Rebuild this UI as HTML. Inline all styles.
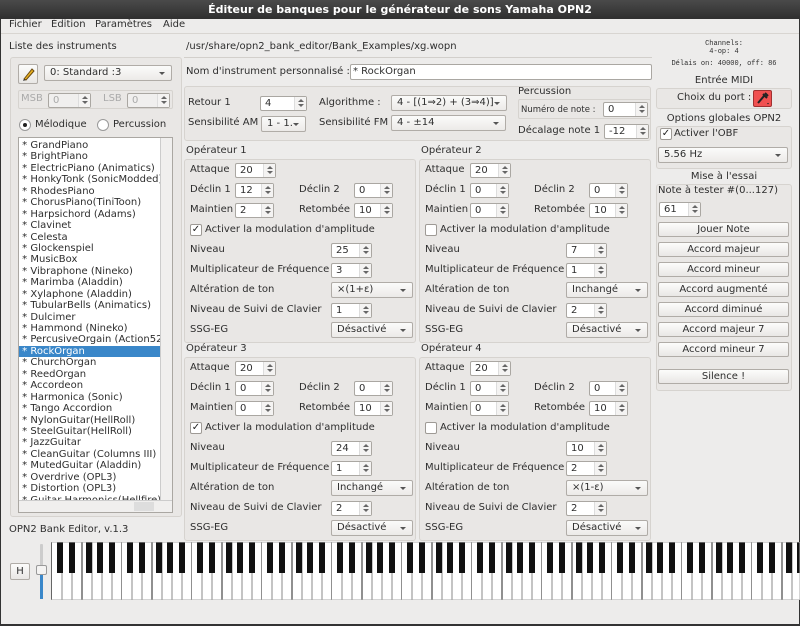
<!DOCTYPE html>
<html><head><meta charset="utf-8">
<style>
*{box-sizing:border-box;margin:0;padding:0}
body{width:800px;height:626px;position:relative;overflow:hidden;background:#edeceb;font-family:"DejaVu Sans","Liberation Sans",sans-serif;font-size:10px;color:#2e2e2e}
.a{position:absolute;white-space:nowrap}
.l{position:absolute;white-space:nowrap;line-height:14px}
.sp{position:absolute;height:15px;background:#fff;border:1px solid #aaa7a2;border-radius:2px;line-height:13px;padding-left:4px;font-size:10px}
.sp i{position:absolute;right:0;top:0;width:12px;height:13px;border-left:1px solid #ddd;background:#f4f3f2}
.sp i:before{content:"";position:absolute;left:3px;top:2px;border:3px solid transparent;border-bottom:3px solid #666;border-top:0}
.sp i:after{content:"";position:absolute;left:3px;top:7px;border:3px solid transparent;border-top:3px solid #666;border-bottom:0}
.dis{color:#aaa;background:#f0efee}
.cb{position:absolute;height:16px;background:linear-gradient(#fbfbfa,#eceae8);border:1px solid #b0aca7;border-radius:2px;line-height:14px;padding-left:5px;overflow:hidden}
.cb:after{content:"";position:absolute;right:6px;top:6px;border:3.5px solid transparent;border-top:3.5px solid #555;border-bottom:0}
.box{position:absolute;border:1px solid #d6d3cf;border-radius:3px;background:#e9e7e5}
.chk{position:absolute;width:12px;height:12px;background:#fff;border:1px solid #9e9a95;border-radius:2px;font-size:10px;line-height:10px;text-align:center;font-weight:bold;color:#222}
.btn{position:absolute;left:658px;width:131px;height:15px;background:linear-gradient(#fcfcfb,#e9e7e5);border:1px solid #b0aca7;border-radius:2px;text-align:center;line-height:13px}
.op{position:absolute;width:232px;height:184px;border:1px solid #d6d3cf;border-radius:3px;background:#e9e7e5}
.op .l{left:5px}
.lst div{height:11.45px;line-height:11.45px}
</style></head><body>
<div class="a" style="left:0;top:0;width:800px;height:19px;background:linear-gradient(#4a4a4a,#2f2f2f);color:#fff;font-weight:bold;font-size:11px;line-height:19px;text-align:center">Éditeur de banques pour le générateur de sons Yamaha OPN2</div>
<div class="a" style="left:0;top:19px;width:1px;height:607px;background:#333"></div>
<div class="a" style="left:799px;top:19px;width:1px;height:607px;background:#333"></div>
<div class="a" style="left:0;top:624px;width:800px;height:2px;background:#333"></div>
<div class="l" style="left:9px;top:18px">Fichier</div>
<div class="l" style="left:51px;top:18px">Édition</div>
<div class="l" style="left:95px;top:18px">Paramètres</div>
<div class="l" style="left:163px;top:18px">Aide</div>
<div class="a" style="left:1px;top:33px;width:798px;height:1px;background:#d8d5d1"></div>

<div class="l" style="left:9px;top:40px">Liste des instruments</div>
<div class="box" style="left:10px;top:57px;width:172px;height:460px"></div>
<div class="a" style="left:18px;top:64px;width:20px;height:20px;background:linear-gradient(#fcfcfb,#e9e7e5);border:1px solid #b0aca7;border-radius:2px">
<svg width="18" height="18" viewBox="0 0 18 18"><path d="M5 14 L13 4 L15 6 L7 15 Z" fill="#e8b020" stroke="#6a4a10" stroke-width="1"/><path d="M5 14 L4 16 L7 15" fill="#333"/></svg></div>
<div class="cb" style="left:44px;top:65px;width:128px">0: Standard :3</div>
<div class="a" style="left:18px;top:90px;width:155px;height:19px;border:1px solid #d6d3cf;border-radius:2px"></div>
<div class="l" style="left:21px;top:92px;color:#aaa">MSB</div>
<div class="sp dis" style="left:48px;top:93px;width:43px">0<i></i></div>
<div class="l" style="left:103px;top:92px;color:#aaa">LSB</div>
<div class="sp dis" style="left:127px;top:93px;width:43px">0<i></i></div>
<div class="a" style="left:19px;top:119px;width:12px;height:12px;border-radius:50%;background:#fff;border:1px solid #999"><div style="position:absolute;left:3px;top:3px;width:4px;height:4px;border-radius:50%;background:#222"></div></div>
<div class="l" style="left:35px;top:118px">Mélodique</div>
<div class="a" style="left:97px;top:119px;width:12px;height:12px;border-radius:50%;background:#fff;border:1px solid #999"></div>
<div class="l" style="left:113px;top:118px">Percussion</div>
<div class="a" style="left:18px;top:137px;width:155px;height:376px;background:#fff;border:1px solid #aaa7a2;overflow:hidden">
<div class="lst" style="position:absolute;left:0;top:2px;width:142px;font-size:10px;overflow:hidden">
<div>&nbsp;* GrandPiano</div><div>&nbsp;* BrightPiano</div><div>&nbsp;* ElectricPiano (Animatics)</div><div>&nbsp;* HonkyTonk (SonicModded)</div><div>&nbsp;* RhodesPiano</div><div>&nbsp;* ChorusPiano(TiniToon)</div><div>&nbsp;* Harpsichord (Adams)</div><div>&nbsp;* Clavinet</div><div>&nbsp;* Celesta</div><div>&nbsp;* Glockenspiel</div><div>&nbsp;* MusicBox</div><div>&nbsp;* Vibraphone (Nineko)</div><div>&nbsp;* Marimba (Aladdin)</div><div>&nbsp;* Xylaphone (Aladdin)</div><div>&nbsp;* TubularBells (Animatics)</div><div>&nbsp;* Dulcimer</div><div>&nbsp;* Hammond (Nineko)</div><div>&nbsp;* PercusiveOrgain (Action52)</div><div style="background:#3a87c9;color:#fff">&nbsp;* RockOrgan</div><div>&nbsp;* ChurchOrgan</div><div>&nbsp;* ReedOrgan</div><div>&nbsp;* Accordeon</div><div>&nbsp;* Harmonica (Sonic)</div><div>&nbsp;* Tango Accordion</div><div>&nbsp;* NylonGuitar(HellRoll)</div><div>&nbsp;* SteelGuitar(HellRoll)</div><div>&nbsp;* JazzGuitar</div><div>&nbsp;* CleanGuitar (Columns III)</div><div>&nbsp;* MutedGuitar (Aladdin)</div><div>&nbsp;* Overdrive (OPL3)</div><div>&nbsp;* Distortion (OPL3)</div><div>&nbsp;* Guitar Harmonics(Hellfire)</div>
</div>
<div style="position:absolute;right:0;top:0;width:12px;height:362px;background:#f0efee;border-left:1px solid #ccc"></div>
<div style="position:absolute;left:0;bottom:0;width:153px;height:12px;background:#f0efee;border-top:1px solid #ccc"><div style="position:absolute;left:115px;top:1px;width:20px;height:9px;background:#ddd"></div></div>
</div>
<div class="l" style="left:9px;top:523px">OPN2 Bank Editor, v.1.3</div>

<div class="l" style="left:186px;top:40px">/usr/share/opn2_bank_editor/Bank_Examples/xg.wopn</div>
<div class="a" style="left:184px;top:57px;width:468px;height:1px;background:#d2cfcb"></div>
<div class="l" style="left:186px;top:65px">Nom d'instrument personnalisé :</div>
<div class="sp" style="left:350px;top:64px;width:302px;height:16px;padding-left:2px">* RockOrgan</div>

<div class="box" style="left:184px;top:86px;width:467px;height:55px"></div>
<div class="l" style="left:188px;top:96px">Retour 1</div>
<div class="sp" style="left:260px;top:96px;width:47px">4<i></i></div>
<div class="l" style="left:188px;top:116px">Sensibilité AM</div>
<div class="cb" style="left:261px;top:116px;width:45px">1 - 1.</div>
<div class="l" style="left:319px;top:96px">Algorithme :</div>
<div class="cb" style="left:391px;top:95px;width:116px">4 - [(1⇒2) + (3⇒4)]</div>
<div class="l" style="left:319px;top:116px">Sensibilité FM</div>
<div class="cb" style="left:391px;top:115px;width:115px">4 - ±14</div>
<div class="l" style="left:518px;top:85px">Percussion</div>
<div class="a" style="left:518px;top:99px;width:133px;height:20px;border:1px solid #d6d3cf;border-radius:2px"></div>
<div class="l" style="left:521px;top:103px;font-size:8.5px">Numéro de note :</div>
<div class="sp" style="left:603px;top:102px;width:45px">0<i></i></div>
<div class="l" style="left:518px;top:124px">Décalage note 1</div>
<div class="sp" style="left:604px;top:124px;width:45px">-12<i></i></div>

<div class="l" style="left:186px;top:144px">Opérateur 1</div>
<div class="op" style="left:184px;top:159px">
<div class="l" style="top:3px">Attaque</div><div class="sp" style="left:50px;top:3px;width:41px">20<i></i></div>
<div class="l" style="top:23px">Déclin 1</div><div class="sp" style="left:50px;top:23px;width:39px">12<i></i></div>
<div class="l" style="left:114px;top:23px">Déclin 2</div><div class="sp" style="left:169px;top:23px;width:39px">0<i></i></div>
<div class="l" style="top:43px">Maintien</div><div class="sp" style="left:50px;top:43px;width:39px">2<i></i></div>
<div class="l" style="left:114px;top:43px">Retombée</div><div class="sp" style="left:169px;top:43px;width:39px">10<i></i></div>
<div class="chk" style="left:5px;top:64px">✓</div><div class="l" style="left:20px;top:63px">Activer la modulation d'amplitude</div>
<div class="l" style="top:83px">Niveau</div><div class="sp" style="left:146px;top:83px;width:41px">25<i></i></div>
<div class="l" style="top:103px">Multiplicateur de Fréquence</div><div class="sp" style="left:146px;top:103px;width:41px">3<i></i></div>
<div class="l" style="top:123px">Altération de ton</div><div class="cb" style="left:146px;top:122px;width:82px">×(1+ε)</div>
<div class="l" style="top:143px">Niveau de Suivi de Clavier</div><div class="sp" style="left:146px;top:143px;width:41px">1<i></i></div>
<div class="l" style="top:163px">SSG-EG</div><div class="cb" style="left:146px;top:162px;width:82px">Désactivé</div>
</div>

<div class="l" style="left:421px;top:144px">Opérateur 2</div>
<div class="op" style="left:419px;top:159px">
<div class="l" style="top:3px">Attaque</div><div class="sp" style="left:50px;top:3px;width:41px">20<i></i></div>
<div class="l" style="top:23px">Déclin 1</div><div class="sp" style="left:50px;top:23px;width:39px">0<i></i></div>
<div class="l" style="left:114px;top:23px">Déclin 2</div><div class="sp" style="left:169px;top:23px;width:39px">0<i></i></div>
<div class="l" style="top:43px">Maintien</div><div class="sp" style="left:50px;top:43px;width:39px">0<i></i></div>
<div class="l" style="left:114px;top:43px">Retombée</div><div class="sp" style="left:169px;top:43px;width:39px">10<i></i></div>
<div class="chk" style="left:5px;top:64px"></div><div class="l" style="left:20px;top:63px">Activer la modulation d'amplitude</div>
<div class="l" style="top:83px">Niveau</div><div class="sp" style="left:146px;top:83px;width:41px">7<i></i></div>
<div class="l" style="top:103px">Multiplicateur de Fréquence</div><div class="sp" style="left:146px;top:103px;width:41px">1<i></i></div>
<div class="l" style="top:123px">Altération de ton</div><div class="cb" style="left:146px;top:122px;width:82px">Inchangé</div>
<div class="l" style="top:143px">Niveau de Suivi de Clavier</div><div class="sp" style="left:146px;top:143px;width:41px">2<i></i></div>
<div class="l" style="top:163px">SSG-EG</div><div class="cb" style="left:146px;top:162px;width:82px">Désactivé</div>
</div>

<div class="l" style="left:186px;top:342px">Opérateur 3</div>
<div class="op" style="left:184px;top:357px">
<div class="l" style="top:3px">Attaque</div><div class="sp" style="left:50px;top:3px;width:41px">20<i></i></div>
<div class="l" style="top:23px">Déclin 1</div><div class="sp" style="left:50px;top:23px;width:39px">0<i></i></div>
<div class="l" style="left:114px;top:23px">Déclin 2</div><div class="sp" style="left:169px;top:23px;width:39px">0<i></i></div>
<div class="l" style="top:43px">Maintien</div><div class="sp" style="left:50px;top:43px;width:39px">0<i></i></div>
<div class="l" style="left:114px;top:43px">Retombée</div><div class="sp" style="left:169px;top:43px;width:39px">10<i></i></div>
<div class="chk" style="left:5px;top:64px">✓</div><div class="l" style="left:20px;top:63px">Activer la modulation d'amplitude</div>
<div class="l" style="top:83px">Niveau</div><div class="sp" style="left:146px;top:83px;width:41px">24<i></i></div>
<div class="l" style="top:103px">Multiplicateur de Fréquence</div><div class="sp" style="left:146px;top:103px;width:41px">1<i></i></div>
<div class="l" style="top:123px">Altération de ton</div><div class="cb" style="left:146px;top:122px;width:82px">Inchangé</div>
<div class="l" style="top:143px">Niveau de Suivi de Clavier</div><div class="sp" style="left:146px;top:143px;width:41px">2<i></i></div>
<div class="l" style="top:163px">SSG-EG</div><div class="cb" style="left:146px;top:162px;width:82px">Désactivé</div>
</div>

<div class="l" style="left:421px;top:342px">Opérateur 4</div>
<div class="op" style="left:419px;top:357px">
<div class="l" style="top:3px">Attaque</div><div class="sp" style="left:50px;top:3px;width:41px">20<i></i></div>
<div class="l" style="top:23px">Déclin 1</div><div class="sp" style="left:50px;top:23px;width:39px">0<i></i></div>
<div class="l" style="left:114px;top:23px">Déclin 2</div><div class="sp" style="left:169px;top:23px;width:39px">0<i></i></div>
<div class="l" style="top:43px">Maintien</div><div class="sp" style="left:50px;top:43px;width:39px">0<i></i></div>
<div class="l" style="left:114px;top:43px">Retombée</div><div class="sp" style="left:169px;top:43px;width:39px">10<i></i></div>
<div class="chk" style="left:5px;top:64px"></div><div class="l" style="left:20px;top:63px">Activer la modulation d'amplitude</div>
<div class="l" style="top:83px">Niveau</div><div class="sp" style="left:146px;top:83px;width:41px">10<i></i></div>
<div class="l" style="top:103px">Multiplicateur de Fréquence</div><div class="sp" style="left:146px;top:103px;width:41px">2<i></i></div>
<div class="l" style="top:123px">Altération de ton</div><div class="cb" style="left:146px;top:122px;width:82px">×(1-ε)</div>
<div class="l" style="top:143px">Niveau de Suivi de Clavier</div><div class="sp" style="left:146px;top:143px;width:41px">2<i></i></div>
<div class="l" style="top:163px">SSG-EG</div><div class="cb" style="left:146px;top:162px;width:82px">Désactivé</div>
</div>

<div class="a" style="left:656px;top:40px;width:136px;text-align:center;font-family:'Liberation Mono',monospace;font-size:7px;line-height:8px">Channels:<br>4-op: 4</div>
<div class="a" style="left:656px;top:60px;width:136px;text-align:center;font-family:'Liberation Mono',monospace;font-size:7px;line-height:8px">Délais on: 40000, off: 86</div>
<div class="a" style="left:656px;top:74px;width:136px;text-align:center;line-height:14px">Entrée MIDI</div>
<div class="box" style="left:656px;top:88px;width:136px;height:21px"></div>
<div class="l" style="left:677px;top:91px">Choix du port :</div>
<div class="a" style="left:753px;top:90px;width:19px;height:17px;background:#f05050;border:1px solid #a03030;border-radius:2px">
<svg width="17" height="15" viewBox="0 0 17 15"><path d="M4 12 L10 5 M9 3 L13 7 M11 2 L14 5" stroke="#222" stroke-width="2"/><path d="M13 12 l2 0 l-1 1.5z" fill="#222"/></svg></div>
<div class="a" style="left:656px;top:112px;width:136px;text-align:center;line-height:14px">Options globales OPN2</div>
<div class="box" style="left:656px;top:126px;width:136px;height:43px"></div>
<div class="chk" style="left:660px;top:128px">✓</div>
<div class="l" style="left:674px;top:127px">Activer l'OBF</div>
<div class="cb" style="left:658px;top:147px;width:130px">5.56 Hz</div>
<div class="a" style="left:656px;top:170px;width:136px;text-align:center;line-height:14px">Mise à l'essai</div>
<div class="box" style="left:656px;top:184px;width:136px;height:207px"></div>
<div class="l" style="left:658px;top:184px">Note à tester #(0...127)</div>
<div class="sp" style="left:659px;top:202px;width:42px">61<i></i></div>
<div class="btn" style="top:222px">Jouer Note</div>
<div class="btn" style="top:242px">Accord majeur</div>
<div class="btn" style="top:262px">Accord mineur</div>
<div class="btn" style="top:282px">Accord augmenté</div>
<div class="btn" style="top:302px">Accord diminué</div>
<div class="btn" style="top:322px">Accord majeur 7</div>
<div class="btn" style="top:342px">Accord mineur 7</div>
<div class="btn" style="top:369px">Silence !</div>

<div class="a" style="left:10px;top:563px;width:20px;height:17px;background:linear-gradient(#fcfcfb,#e9e7e5);border:1px solid #b0aca7;border-radius:2px;text-align:center;line-height:15px">H</div>
<div class="a" style="left:40px;top:544px;width:3px;height:55px;background:#ccc;border-radius:1px"></div>
<div class="a" style="left:40px;top:570px;width:3px;height:29px;background:#3a87c9"></div>
<div class="a" style="left:36px;top:565px;width:11px;height:10px;background:#f4f3f2;border:1px solid #999;border-radius:2px"></div>
<svg class="a" style="left:51px;top:542px" width="749" height="58" viewBox="0 0 749 58">
<defs>
<pattern id="o" x="1" y="0" width="70" height="58" patternUnits="userSpaceOnUse">
<rect width="70" height="58" fill="#fff"/>
<rect x="9.5" y="0" width="1" height="58" fill="#888"/><rect x="19.5" y="0" width="1" height="58" fill="#888"/><rect x="29.5" y="0" width="1" height="58" fill="#222"/><rect x="39.5" y="0" width="1" height="58" fill="#888"/><rect x="49.5" y="0" width="1" height="58" fill="#888"/><rect x="59.5" y="0" width="1" height="58" fill="#888"/><rect x="69.5" y="0" width="1" height="58" fill="#222"/>
<rect x="5" y="0" width="6" height="31" fill="#111"/><rect x="17" y="0" width="6" height="31" fill="#111"/><rect x="34" y="0" width="6" height="31" fill="#111"/><rect x="45" y="0" width="6" height="31" fill="#111"/><rect x="57" y="0" width="6" height="31" fill="#111"/>
</pattern></defs>
<rect x="0" y="0" width="749" height="58" fill="url(#o)" stroke="#aaa" stroke-width="1"/>
</svg>
</body></html>
